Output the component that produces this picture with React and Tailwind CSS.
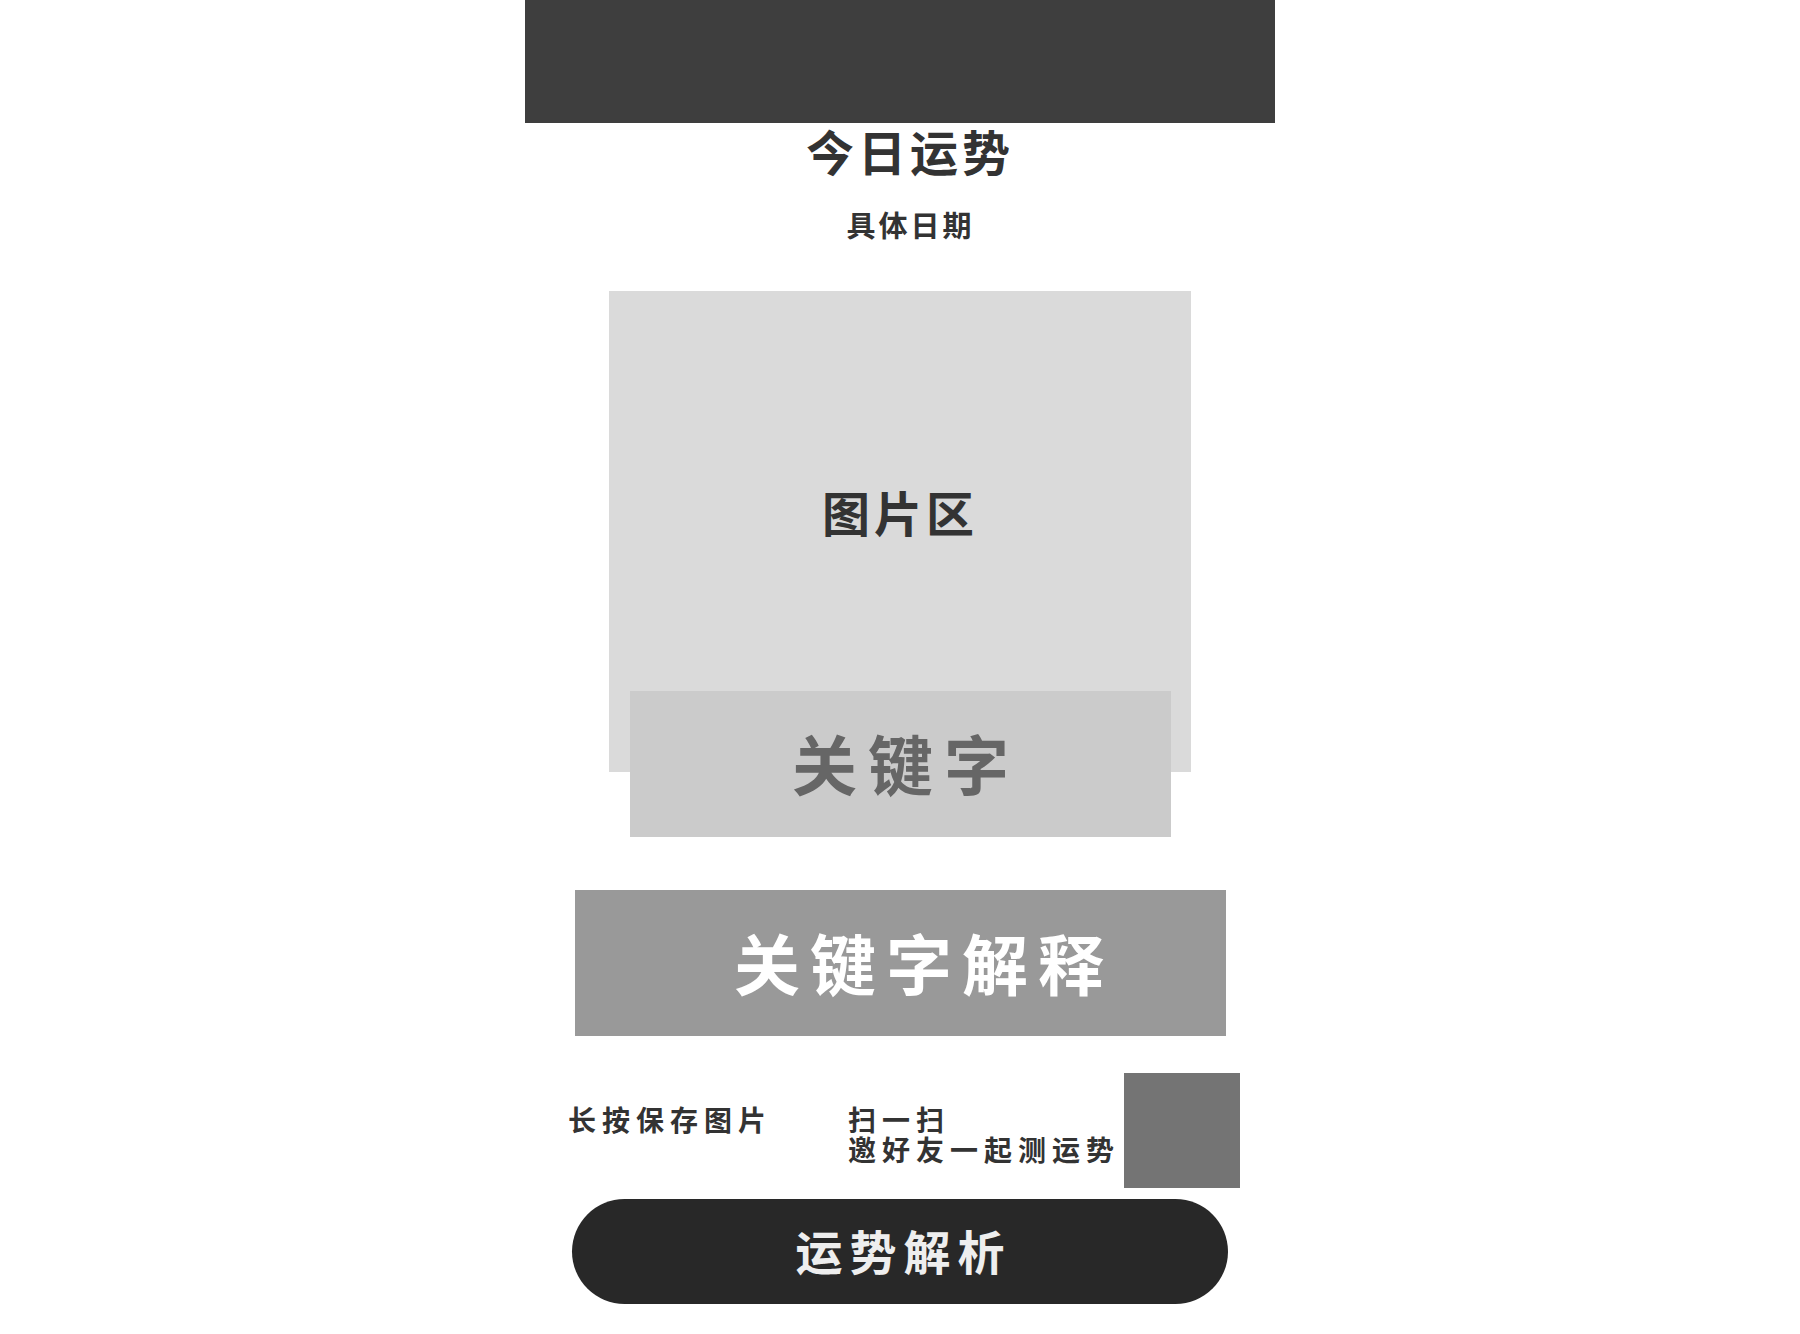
import React from 'react';

const cjk = { fontFamily: '"Noto Sans CJK SC", "Noto Sans", sans-serif' };

const App = () => {
  return (
    <div className="min-h-screen bg-white" style={cjk}>
      <div className="mx-auto flex w-[750px] flex-col items-center">
        {/* top bar */}
        <div className="h-[123px] w-full bg-[#3e3e3e]" />

        {/* heading */}
        <h1 className="mt-[1px] pl-[20px] text-[48px] font-bold leading-[52px] tracking-[4px] text-[#333]">
          今日运势
        </h1>
        <p className="mt-[32px] pl-[21px] text-[29px] font-bold leading-[32px] tracking-[3px] text-[#333]">
          具体日期
        </p>

        {/* picture + keyword */}
        <div className="mt-[51px] flex h-[481px] w-[582px] items-center justify-center bg-[#dadada] pb-[42px]">
          <span className="text-[48px] font-bold tracking-[4px] text-[#333]">图片区</span>
        </div>
        <div className="relative -mt-[81px] flex h-[146px] w-[541px] items-center justify-center bg-[#cbcbcb] pb-[4px]">
          <span className="pl-[12px] text-[65px] font-bold leading-none tracking-[11px] text-[#666]">关键字</span>
        </div>

        <div className="mt-[53px] flex h-[146px] w-[651px] items-center justify-center bg-[#999] pb-[4px] pl-[48px]">
          <span className="text-[66px] font-bold leading-none tracking-[10px] text-white">关键字解释</span>
        </div>

        {/* save / share row */}
        <div className="mt-[37px] flex w-full pl-[43px]">
          <div className="w-[280px] pt-[32px] text-[28px] font-bold leading-[29px] tracking-[6px] text-[#333]">
            长按保存图片
          </div>
          <div className="flex w-[276px] flex-col gap-[2px] pt-[32px] text-[28px] font-bold leading-[28px] tracking-[6px] text-[#333]">
            <div>扫一扫</div>
            <div className="whitespace-nowrap">邀好友一起测运势</div>
          </div>
          <div className="h-[115px] w-[116px] bg-[#747474]" />
        </div>

        <button className="mt-[11px] flex h-[105px] w-[656px] items-center justify-center rounded-full bg-[#282828] pb-[5px]">
          <span className="pl-[7px] text-[47px] font-bold leading-none tracking-[7px] text-[#eee]">运势解析</span>
        </button>
      </div>
    </div>
  );
};

export default App;
